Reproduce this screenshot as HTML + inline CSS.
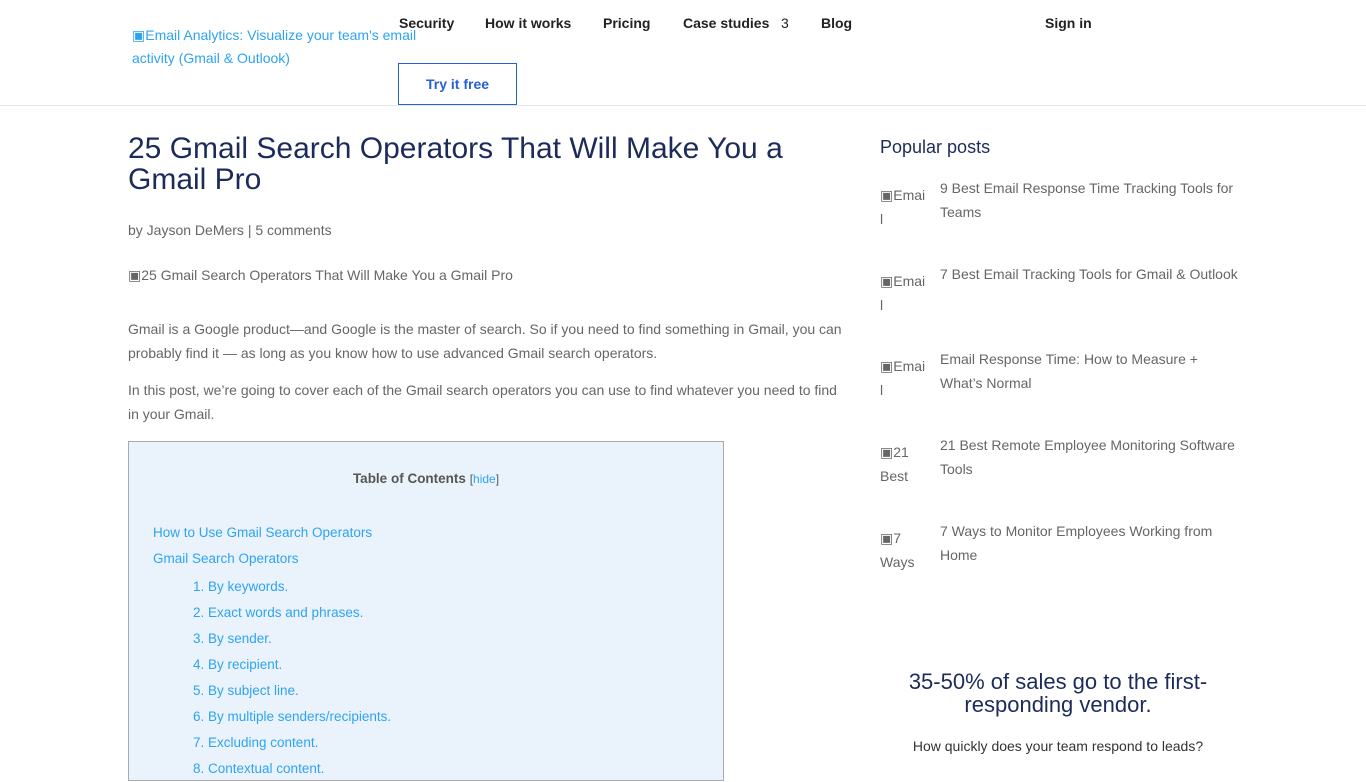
<!DOCTYPE html>
<html><head><meta charset="utf-8"><style>
*{margin:0;padding:0;box-sizing:border-box}
body{width:1366px;height:768px;overflow:hidden;background:#fff;font-family:"Liberation Sans",Arial,sans-serif;color:#666;font-size:14px;position:relative}
.abs{position:absolute}
.hdr{position:absolute;left:0;top:0;width:1366px;height:106px;border-bottom:1px solid #e8e8e8}
.nav{font-weight:bold;color:#222;font-size:14px}
a{color:#2ea3f2;text-decoration:none}
h1{position:absolute;left:128px;top:133px;width:700px;font-weight:normal;font-size:30px;line-height:31px;color:#1c2b5a}
p{font-size:14px;line-height:24px;color:#666}
.toc{position:absolute;left:128px;top:441px;width:596px;height:340px;background:#eaf3fc;border:1px solid #aaa}
.toc a{display:block;font-size:13.5px;line-height:26px}
.pp{position:absolute;left:880px;font-size:14px;line-height:24px;color:#666}
.pp .im{position:absolute;left:0;top:-5px;width:52px;color:#666}
.pp .t{position:absolute;left:60px;top:-12px;width:298px}
</style></head><body>
<div class="hdr"></div>
<a class="abs" style="left:132px;top:24px;width:300px;font-size:14px;line-height:23px">&#9635;Email Analytics: Visualize your team's email activity (Gmail &amp; Outlook)</a>
<div class="abs nav" style="left:399px;top:15px">Security</div>
<div class="abs nav" style="left:485px;top:15px">How it works</div>
<div class="abs nav" style="left:603px;top:15px">Pricing</div>
<div class="abs nav" style="left:683px;top:15px">Case studies &nbsp; <span style="font-weight:normal">3</span></div>
<div class="abs nav" style="left:821px;top:15px">Blog</div>
<div class="abs nav" style="left:1045px;top:15px">Sign in</div>
<div class="abs" style="left:398px;top:63px;width:119px;height:42px;border:1px solid #2461d6;color:#2461d6;font-weight:bold;font-size:14px;text-align:center;line-height:40px">Try it free</div>

<h1>25 Gmail Search Operators That Will Make You a Gmail Pro</h1>
<div class="abs" style="left:128px;top:222px;font-size:14px;color:#666">by Jayson DeMers | 5 comments</div>
<div class="abs" style="left:128px;top:267px;font-size:14px;color:#666">&#9635;25 Gmail Search Operators That Will Make You a Gmail Pro</div>
<p class="abs" style="left:128px;top:317px;width:720px">Gmail is a Google product—and Google is the master of search. So if you need to find something in Gmail, you can probably find it — as long as you know how to use advanced Gmail search operators.</p>
<p class="abs" style="left:128px;top:378px;width:720px">In this post, we’re going to cover each of the Gmail search operators you can use to find whatever you need to find in your Gmail.</p>
<div class="toc">
<div style="text-align:center;margin-top:24px;font-weight:bold;color:#555;font-size:13.5px;line-height:16px">Table of Contents <span style="font-weight:normal;font-size:12px;color:#555">[<a style="display:inline;font-size:12px">hide</a>]</span></div>
<div style="padding:0 24px;margin-top:28px">
<a>How to Use Gmail Search Operators</a>
<a>Gmail Search Operators</a>
<div style="padding-left:40px;margin-top:2px">
<a>1. By keywords.</a><a>2. Exact words and phrases.</a><a>3. By sender.</a><a>4. By recipient.</a><a>5. By subject line.</a><a>6. By multiple senders/recipients.</a><a>7. Excluding content.</a><a>8. Contextual content.</a>
</div></div></div>

<div class="abs" style="left:880px;top:137px;font-size:18px;color:#1c2b5a">Popular posts</div>
<div class="pp" style="top:188px"><div class="im">&#9635;Emai<br>l</div><div class="t">9 Best Email Response Time Tracking Tools for Teams</div></div>
<div class="pp" style="top:274px"><div class="im">&#9635;Emai<br>l</div><div class="t">7 Best Email Tracking Tools for Gmail &amp; Outlook</div></div>
<div class="pp" style="top:359px"><div class="im">&#9635;Emai<br>l</div><div class="t">Email Response Time: How to Measure + What’s Normal</div></div>
<div class="pp" style="top:445px"><div class="im">&#9635;21<br>Best</div><div class="t">21 Best Remote Employee Monitoring Software Tools</div></div>
<div class="pp" style="top:531px"><div class="im">&#9635;7<br>Ways</div><div class="t">7 Ways to Monitor Employees Working from Home</div></div>

<div class="abs" style="left:880px;top:670px;width:356px;text-align:center;font-size:22px;line-height:23px;color:#1c2b5a">35-50% of sales go to the first-responding vendor.</div>
<div class="abs" style="left:880px;top:738px;width:356px;text-align:center;font-size:14px;color:#333">How quickly does your team respond to leads?</div>
</body></html>
